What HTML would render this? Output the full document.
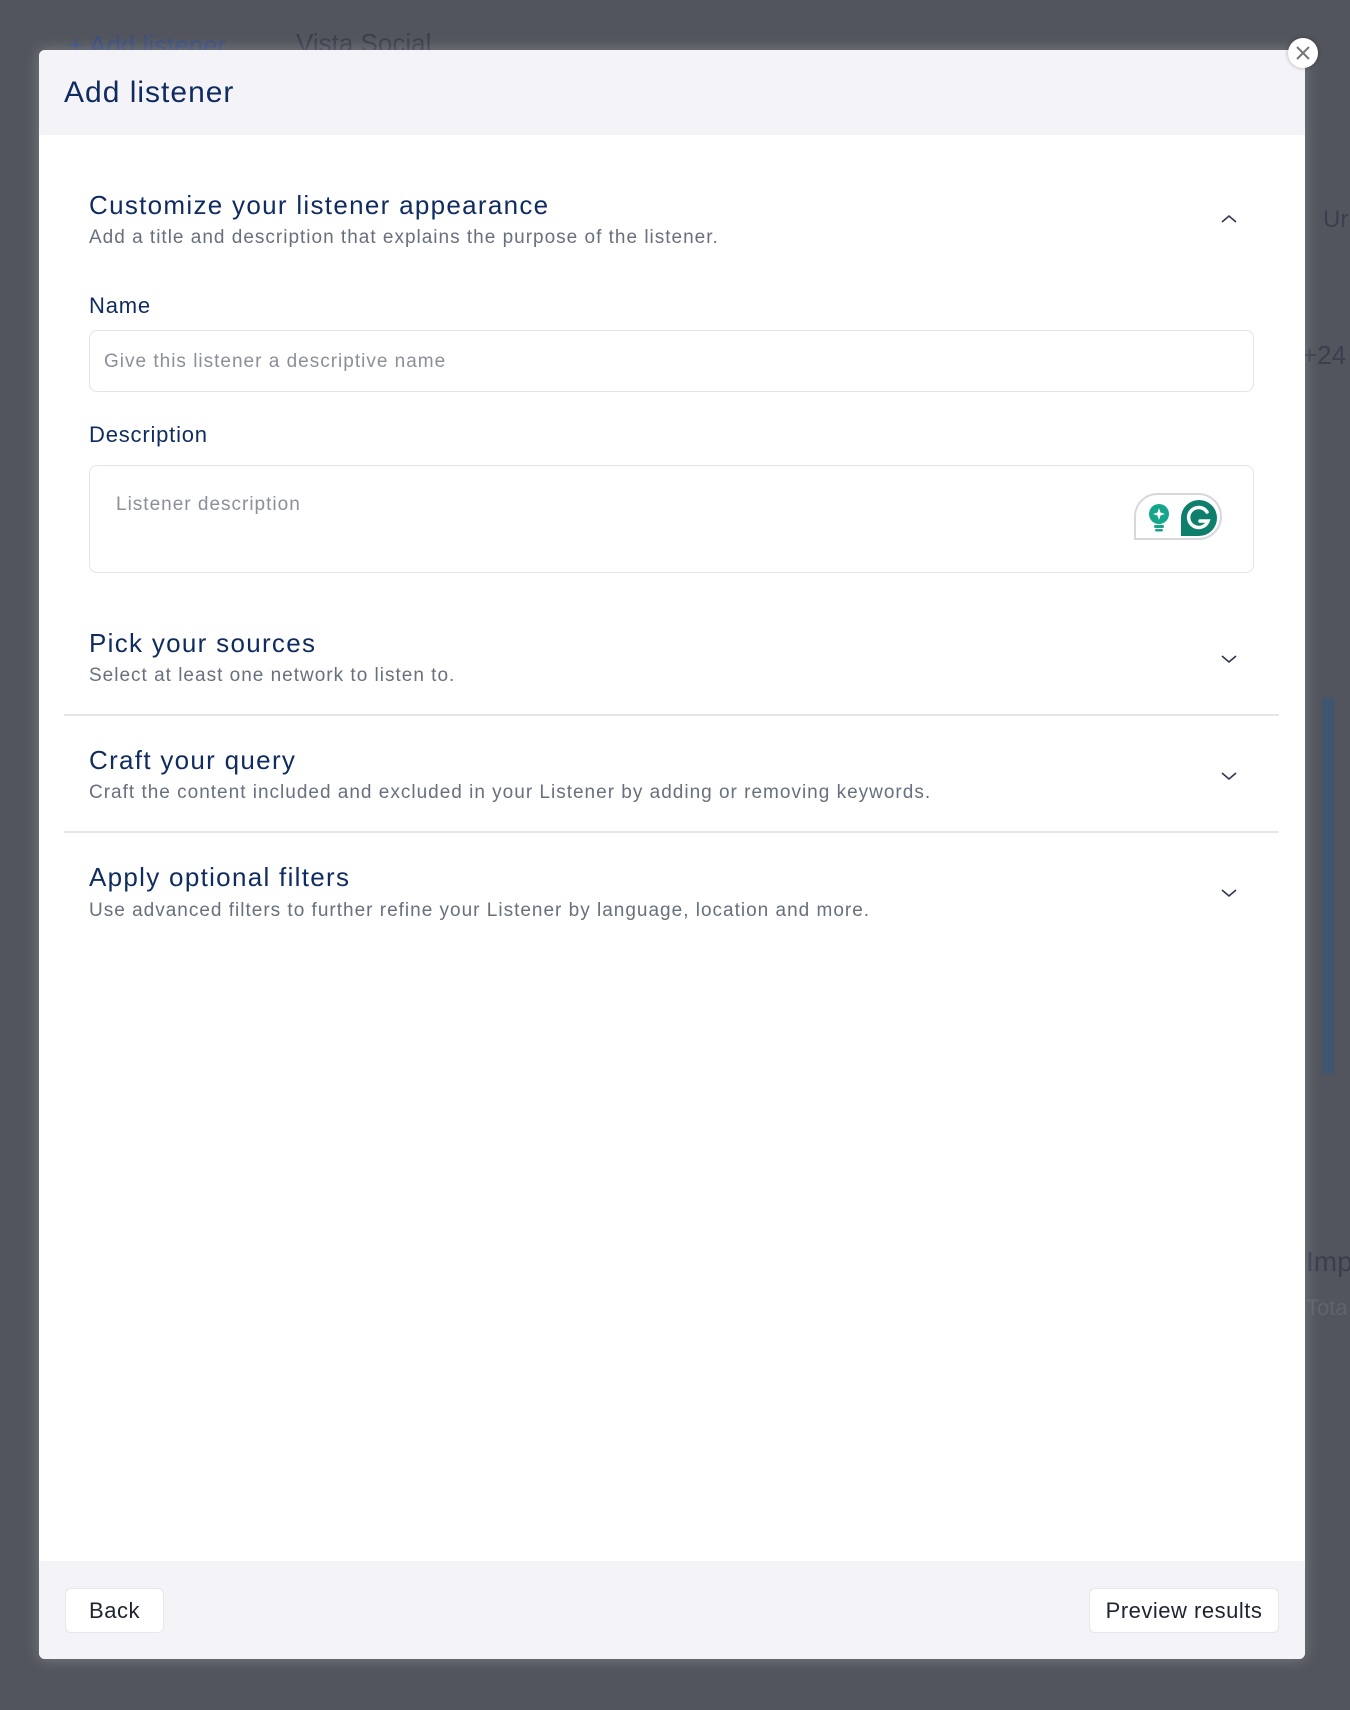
<!DOCTYPE html>
<html><head><meta charset="utf-8"><style>
*{box-sizing:border-box;margin:0;padding:0}
body{width:1350px;height:1710px;background:#52555d;font-family:"Liberation Sans",sans-serif;position:relative;overflow:hidden}
.bg{position:absolute;color:#3a3f4d;font-size:26px}
.modal{position:absolute;left:39px;top:50px;width:1266px;height:1609px;background:#fff;border-radius:6px;overflow:hidden;box-shadow:0 0 14px rgba(255,255,255,.25)}
.head{height:85px;background:#f4f4f8;padding-left:25px;font-size:30px;color:#0f2b5f;line-height:85px;letter-spacing:1px}
.t{position:absolute;left:50px;font-size:26px;color:#0f2b5f;letter-spacing:1.3px;white-space:nowrap}
.s{position:absolute;left:50px;font-size:19px;color:#686f7d;letter-spacing:1px;white-space:nowrap}
.l{position:absolute;left:50px;font-size:22px;color:#0f2b5f;letter-spacing:.8px}
.box{position:absolute;left:50px;width:1165px;border:1px solid #e3e4e8;border-radius:8px}
.ph{position:absolute;font-size:19px;color:#8a8f99;letter-spacing:1px;white-space:nowrap}
.chev{position:absolute;left:1181px;width:18px;height:12px}
.div{position:absolute;left:25px;width:1215px;height:2px;background:#e5e6ea}
.foot{position:absolute;left:0;top:1511px;width:100%;height:98px;background:#f4f4f8}
.btn{position:absolute;top:27px;height:45px;background:#fff;border:1px solid #e6e7eb;border-radius:6px;font-size:22px;color:#1f2330;line-height:43px;text-align:center;letter-spacing:.5px}
</style></head><body>
<div class="bg" style="left:68px;top:30px;color:#3b4f80">+ Add listener</div>
<div class="bg" style="left:296px;top:28px">Vista Social</div>
<div class="bg" style="left:1323px;top:206px;font-size:24px">Ur</div>
<div class="bg" style="left:1302px;top:340px;font-size:26px">+24</div>
<div style="position:absolute;left:1322px;top:698px;width:13px;height:376px;background:#3f5570"></div>
<div class="bg" style="left:1306px;top:1246px;font-size:28px">Imp</div>
<div class="bg" style="left:1306px;top:1295px;font-size:22px;color:#5f636b">Tota</div>
<div class="modal">
<div class="head">Add listener</div>
<div class="t" style="top:140px">Customize your listener appearance</div>
<div class="s" style="top:177px">Add a title and description that explains the purpose of the listener.</div>
<svg class="chev" style="top:163px" viewBox="0 0 18 12"><path d="M2 9L9 3L16 9" fill="none" stroke="#2c3550" stroke-width="1.6"/></svg>
<div class="l" style="top:243px">Name</div>
<div class="box" style="top:280px;height:62px"><span class="ph" style="left:14px;top:20px">Give this listener a descriptive name</span></div>
<div class="l" style="top:372px">Description</div>
<div class="box" style="top:415px;height:108px"><span class="ph" style="left:26px;top:28px">Listener description</span>
<div style="position:absolute;left:1044px;top:27px;width:88px;height:47px;border:2px solid #d6d8dc;border-radius:24px 24px 24px 0;background:#fff">
<svg style="position:absolute;left:10px;top:8px" width="26" height="30" viewBox="0 0 26 30"><circle cx="13" cy="11" r="10" fill="#15a58a"/><path d="M13 5l2 6 -2 6 -2-6z M7 11l6-2 6 2-6 2z" fill="#fff"/><rect x="8" y="22" width="10" height="3" rx="1.5" fill="#15a58a"/><rect x="9" y="26" width="8" height="2.5" rx="1.2" fill="#15a58a"/></svg>
<svg style="position:absolute;left:44px;top:4px" width="38" height="38" viewBox="0 0 38 38"><path d="M19 1a18 18 0 1 1 0 36H1V19A18 18 0 0 1 19 1z" fill="#0d7f6b"/><path d="M27 13a10 10 0 1 0 1 9h-8" fill="none" stroke="#fff" stroke-width="3.5" stroke-linecap="round"/></svg>
</div></div>
<div class="t" style="top:578px">Pick your sources</div>
<div class="s" style="top:615px">Select at least one network to listen to.</div>
<svg class="chev" style="top:603px" viewBox="0 0 18 12"><path d="M2 3L9 9L16 3" fill="none" stroke="#2c3550" stroke-width="1.6"/></svg>
<div class="div" style="top:664px"></div>
<div class="t" style="top:695px">Craft your query</div>
<div class="s" style="top:732px">Craft the content included and excluded in your Listener by adding or removing keywords.</div>
<svg class="chev" style="top:720px" viewBox="0 0 18 12"><path d="M2 3L9 9L16 3" fill="none" stroke="#2c3550" stroke-width="1.6"/></svg>
<div class="div" style="top:781px"></div>
<div class="t" style="top:812px">Apply optional filters</div>
<div class="s" style="top:850px">Use advanced filters to further refine your Listener by language, location and more.</div>
<svg class="chev" style="top:837px" viewBox="0 0 18 12"><path d="M2 3L9 9L16 3" fill="none" stroke="#2c3550" stroke-width="1.6"/></svg>
<div class="foot">
<div class="btn" style="left:26px;width:99px">Back</div>
<div class="btn" style="left:1050px;width:190px">Preview results</div>
</div>
</div>
<div style="position:absolute;left:1288px;top:38px;width:30px;height:30px;border-radius:50%;background:#fff;box-shadow:0 0 4px rgba(0,0,0,.3)"><svg width="30" height="30" viewBox="0 0 30 30"><path d="M9 9L21 21M21 9L9 21" stroke="#777" stroke-width="2"/></svg></div>
</body></html>
